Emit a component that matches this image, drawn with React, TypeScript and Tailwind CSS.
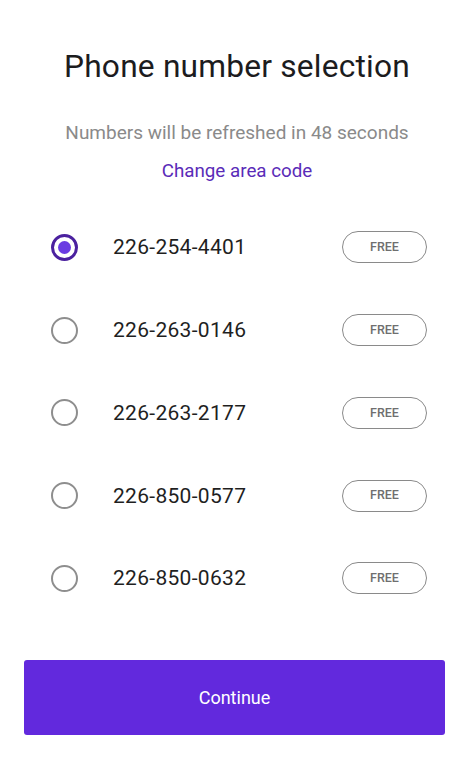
import { useState } from 'react';

const NUMBERS = ['226-254-4401', '226-263-0146', '226-263-2177', '226-850-0577', '226-850-0632'];

export default function App() {
  const [selected, setSelected] = useState(0);

  return (
    <div className="min-h-[763px] w-[474px] bg-white font-['Roboto',sans-serif] flex flex-col">
      <h1 className="pt-[47px] text-center text-[31.7px] leading-[40px] text-[#1c1c1e] tracking-[0.2px]">
        Phone number selection
      </h1>
      <p className="mt-[35px] text-center text-[19px] leading-[22px] text-[#8a8a8a]">
        Numbers will be refreshed in 48 seconds
      </p>
      <button className="mt-[16px] self-center text-[18.8px] leading-[22px] text-[#5a2bb8]">
        Change area code
      </button>

      <ul className="mt-[24px] flex flex-col">
        {NUMBERS.map((n, i) => (
          <li
            key={n}
            onClick={() => setSelected(i)}
            className="h-[82.75px] flex items-center pl-[51px] pr-[47px] cursor-pointer"
          >
            {selected === i ? (
              <span className="w-[27px] h-[27px] rounded-full border-[3px] border-[#4b219f] flex items-center justify-center">
                <span className="w-[13px] h-[13px] rounded-full bg-[#6a3be2]" />
              </span>
            ) : (
              <span className="w-[27px] h-[27px] rounded-full border-[2px] border-[#8e8e8e]" />
            )}
            <span className="ml-[35px] text-[21px] leading-[28px] text-[#1f1f1f] tracking-[0.3px]">{n}</span>
            <span className="ml-auto w-[85px] h-[32px] rounded-full border-[1.5px] border-[#8a8a8a] flex items-center justify-center text-[12.5px] font-medium text-[#6f6f6f]">
              FREE
            </span>
          </li>
        ))}
      </ul>

      <div className="mt-[40px] px-[24px]">
        <button className="w-[421px] h-[75px] rounded-[3px] bg-[#6229dd] text-white text-[18px]">
          Continue
        </button>
      </div>
    </div>
  );
}
